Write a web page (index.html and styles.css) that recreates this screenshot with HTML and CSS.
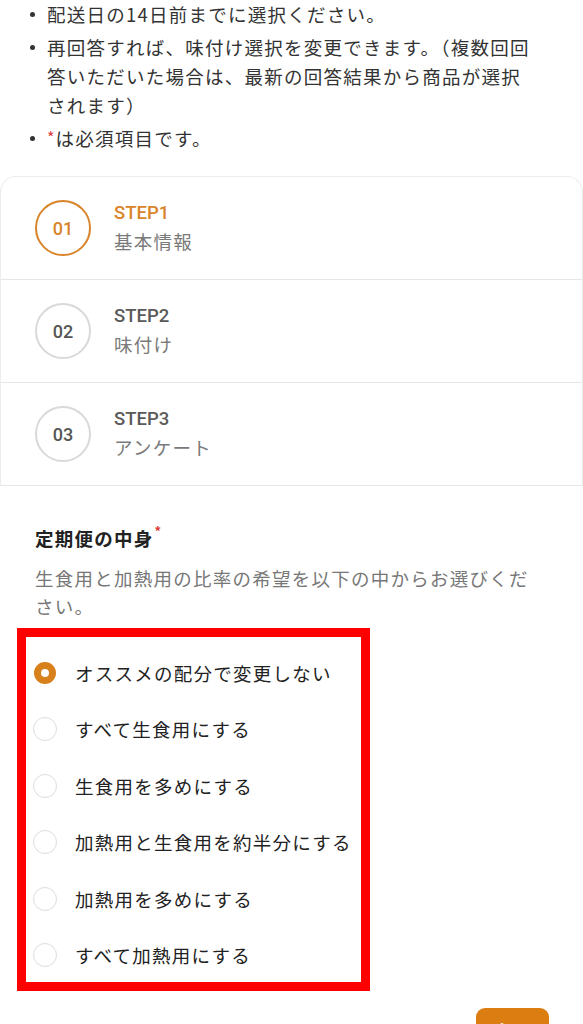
FILE: index.html
```html
<!DOCTYPE html>
<html lang="ja">
<head>
<meta charset="utf-8">
<title>定期便の中身</title>
<link rel="stylesheet" href="styles.css">
</head>
<body>
<ul class="notes">
  <li>配送日の14日前までに選択ください。</li>
  <li>再回答すれば、味付け選択を変更できます。（複数回回答いただいた場合は、最新の回答結果から商品が選択されます）</li>
  <li><span><span class="req req-inline">*</span>は必須項目です。</span></li>
</ul>

<div class="steps">
  <div class="step is-active">
    <div class="step-num">01</div>
    <div class="step-text">
      <div class="step-label">STEP1</div>
      <div class="step-name">基本情報</div>
    </div>
  </div>
  <div class="step">
    <div class="step-num">02</div>
    <div class="step-text">
      <div class="step-label">STEP2</div>
      <div class="step-name">味付け</div>
    </div>
  </div>
  <div class="step">
    <div class="step-num">03</div>
    <div class="step-text">
      <div class="step-label">STEP3</div>
      <div class="step-name">アンケート</div>
    </div>
  </div>
</div>

<section class="question">
  <h2 class="q-title">定期便の中身<span class="req">*</span></h2>
  <p class="q-desc">生食用と加熱用の比率の希望を以下の中からお選びください。</p>
</section>

<div class="options">
  <label class="option"><span class="radio is-checked"></span><span class="opt-text">オススメの配分で変更しない</span></label>
  <label class="option"><span class="radio"></span><span class="opt-text">すべて生食用にする</span></label>
  <label class="option"><span class="radio"></span><span class="opt-text">生食用を多めにする</span></label>
  <label class="option"><span class="radio"></span><span class="opt-text">加熱用と生食用を約半分にする</span></label>
  <label class="option"><span class="radio"></span><span class="opt-text">加熱用を多めにする</span></label>
  <label class="option"><span class="radio"></span><span class="opt-text">すべて加熱用にする</span></label>
</div>

<div class="actions">
  <button class="next-btn">次へ</button>
</div>
</body>
</html>
```

FILE: styles.css
```css
* { box-sizing: border-box; }

html, body {
  margin: 0;
  padding: 0;
  background: #ffffff;
}

body {
  width: 583px;
  overflow: hidden;
  font-family: "Noto Sans CJK JP", "Noto Sans", sans-serif;
  color: #333333;
  font-size: 18.5px;
  letter-spacing: 1.25px;
}

.notes {
  list-style: none;
  margin: 0 0 23px 0;
  padding: 0 46px 0 0;
}

.notes li {
  display: flex;
  align-items: flex-start;
  line-height: 29px;
  margin-bottom: 4px;
}

.notes li:last-child { margin-bottom: 0; }

.notes li::before {
  content: "";
  flex: 0 0 5px;
  width: 5px;
  height: 5px;
  border-radius: 50%;
  background: #333333;
  margin: 12px 12px 0 30px;
}

.req {
  color: #e03a3a;
  font-size: 13px;
  vertical-align: top;
  line-height: 1;
  letter-spacing: 0;
  margin-left: 1px;
}

.req-inline {
  font-size: 16px;
  margin-left: 0;
  margin-right: 1px;
  position: relative;
  top: 5px;
}

/* Steps */
.steps {
  border: 1px solid #ececec;
  border-bottom: none;
  border-radius: 16px 16px 0 0;
}

.step {
  display: flex;
  align-items: center;
  height: 103px;
  padding-left: 34px;
  border-bottom: 1px solid #e6e6e6;
}

.step-num {
  flex: 0 0 56px;
  width: 56px;
  height: 56px;
  border-radius: 50%;
  border: 2px solid #d9d9d9;
  display: flex;
  align-items: center;
  justify-content: center;
  font-family: "Roboto", "Noto Sans", sans-serif;
  font-weight: 500;
  font-size: 18px;
  letter-spacing: 0;
  color: #555555;
}

.step-text {
  margin-left: 23px;
  margin-top: -3px;
}

.step-label {
  font-family: "Roboto", "Noto Sans", sans-serif;
  font-weight: 500;
  font-size: 18.5px;
  letter-spacing: 0;
  line-height: 28px;
  color: #5a5a5a;
}

.step-name {
  line-height: 28px;
  color: #7a7a7a;
}

.step.is-active .step-num {
  border-color: #d9842a;
  color: #d9842a;
}

.step.is-active .step-label {
  color: #d9842a;
}

/* Question */
.question {
  padding: 38px 38px 0 35px;
}

.q-title {
  margin: 0;
  font-size: 18.5px;
  font-weight: 700;
  line-height: 28px;
  color: #222222;
}

.q-desc {
  margin: 12px 0 0 0;
  line-height: 28px;
  color: #777777;
}

/* Options (highlighted) */
.options {
  margin: 8px 0 0 17px;
  width: 353px;
  border: 9px solid #ff0000;
  padding: 22px 0 13px 7px;
  display: flex;
  flex-direction: column;
  gap: 28.4px;
}

.option {
  display: flex;
  align-items: center;
  height: 28px;
  color: #222222;
  white-space: nowrap;
}

.radio {
  flex: 0 0 24px;
  width: 24px;
  height: 24px;
  border-radius: 50%;
  border: 1px solid #dddddd;
  background: #ffffff;
  margin-right: 18px;
}

.radio.is-checked {
  border: 7px solid #d8801c;
  width: 22px;
  height: 22px;
  flex-basis: 22px;
  margin-left: 1px;
  margin-right: 19px;
}

.opt-text {
  line-height: 28px;
}

.actions {
  display: flex;
  justify-content: flex-end;
  padding: 17px 34px 0 0;
}

.next-btn {
  width: 73px;
  height: 46px;
  border: none;
  border-radius: 9px;
  background: #dc7d12;
  color: #ffffff;
  font-family: "Noto Sans CJK JP", sans-serif;
  font-size: 18px;
  font-weight: 700;
  letter-spacing: 1px;
}
```
